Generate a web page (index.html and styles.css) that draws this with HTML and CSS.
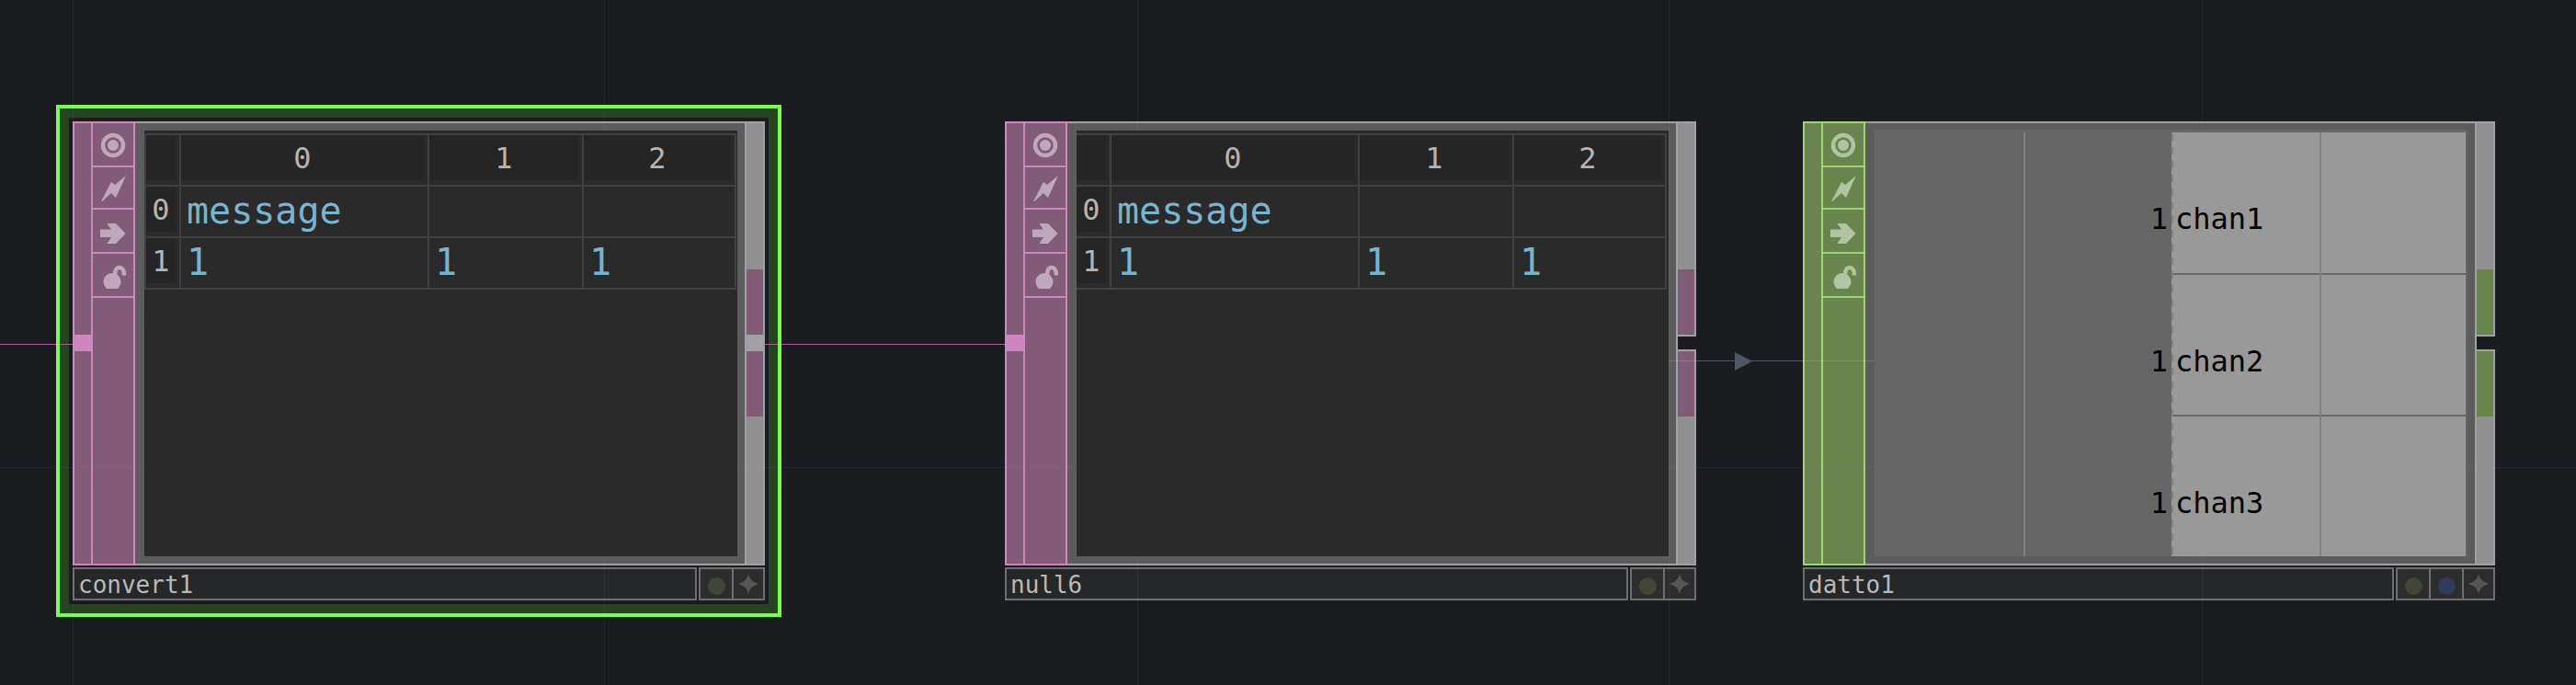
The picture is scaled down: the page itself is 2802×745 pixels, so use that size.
FILE: index.html
```
<!DOCTYPE html>
<html lang="en">
<head>
<meta charset="utf-8">
<title>Network editor</title>
<link rel="stylesheet" href="styles.css">
</head>
<body>
<svg class="defs" width="0" height="0" aria-hidden="true">
  <symbol id="i-view" viewBox="0 0 28 28"><circle cx="14" cy="14" r="11" fill="none" stroke="currentColor" stroke-width="4.500"/><circle cx="14" cy="14" r="6"/></symbol>
  <symbol id="i-bolt" viewBox="0 0 28 28"><path d="M0 30 12 7 16 10 28 0 17 24 12 19Z"/></symbol>
  <symbol id="i-arrow" viewBox="0 0 28 28"><path d="M0 11.500H12L8 6V5H17L27.500 16 17 27H8V26L12 20H0Z"/></symbol>
  <symbol id="i-lock" viewBox="0 0 28 28"><circle cx="13" cy="20.500" r="9.500"/><path d="M16.500 14C14 3 26.500 1 26 13.500" fill="none" stroke="currentColor" stroke-width="4.500"/></symbol>
  <symbol id="i-star" viewBox="0 0 22 22"><path d="M11 0Q12.500 8.500 22 11 12.500 13.500 11 22 9.500 13.500 0 11 9.500 8.500 11 0Z"/></symbol>
</svg>
<main class="network">
  <article class="node table-op linked-in linked-out selected" style="left:79px;width:753px">
    <div class="body">
      <div class="input"></div>
      <div class="flags">
        <button aria-label="Viewer active"><svg><use href="#i-view"/></svg></button>
        <button aria-label="Cooking"><svg><use href="#i-bolt"/></svg></button>
        <button aria-label="Bypass"><svg><use href="#i-arrow"/></svg></button>
        <button aria-label="Lock"><svg><use href="#i-lock"/></svg></button>
      </div>
      <div class="viewer">
        <table class="grid">
          <colgroup><col class="c-row"><col class="c-first"><col class="c-mid"><col class="c-last"></colgroup>
          <tr><th><span></span></th><th><span>0</span></th><th><span>1</span></th><th><span>2</span></th></tr>
          <tr><th><span>0</span></th><td>message</td><td></td><td></td></tr>
          <tr><th><span>1</span></th><td>1</td><td>1</td><td>1</td></tr>
        </table>
      </div>
      <div class="output"><div class="port up"></div><div class="notch"></div><div class="port down"></div></div>
    </div>
    <div class="footer">
      <input class="name" aria-label="Operator name" value="convert1">
      <div class="tools">
        <button aria-label="Display"><i class="dot"></i></button>
        <button aria-label="Activate viewer"><svg><use href="#i-star"/></svg></button>
      </div>
    </div>
  </article>

  <article class="node table-op linked-in" style="left:1093px;width:752px">
    <div class="body">
      <div class="input"></div>
      <div class="flags">
        <button aria-label="Viewer active"><svg><use href="#i-view"/></svg></button>
        <button aria-label="Cooking"><svg><use href="#i-bolt"/></svg></button>
        <button aria-label="Bypass"><svg><use href="#i-arrow"/></svg></button>
        <button aria-label="Lock"><svg><use href="#i-lock"/></svg></button>
      </div>
      <div class="viewer scrolled">
        <table class="grid">
          <colgroup><col class="c-row"><col class="c-first"><col class="c-mid"><col class="c-last"></colgroup>
          <tr><th><span></span></th><th><span>0</span></th><th><span>1</span></th><th><span>2</span></th></tr>
          <tr><th><span>0</span></th><td>message</td><td></td><td></td></tr>
          <tr><th><span>1</span></th><td>1</td><td>1</td><td>1</td></tr>
        </table>
      </div>
      <div class="output"><div class="port up"></div><div class="notch"></div><div class="port down"></div></div>
    </div>
    <div class="footer">
      <input class="name" aria-label="Operator name" value="null6">
      <div class="tools">
        <button aria-label="Display"><i class="dot"></i></button>
        <button aria-label="Activate viewer"><svg><use href="#i-star"/></svg></button>
      </div>
    </div>
  </article>

  <article class="node chan-op" style="left:1961px;width:753px">
    <div class="body">
      <div class="input"></div>
      <div class="flags">
        <button aria-label="Viewer active"><svg><use href="#i-view"/></svg></button>
        <button aria-label="Cooking"><svg><use href="#i-bolt"/></svg></button>
        <button aria-label="Bypass"><svg><use href="#i-arrow"/></svg></button>
        <button aria-label="Lock"><svg><use href="#i-lock"/></svg></button>
      </div>
      <div class="viewer channels">
        <div class="values"><span>1</span><span>1</span><span>1</span></div>
        <div class="names"><span>chan1</span><span>chan2</span><span>chan3</span></div>
      </div>
      <div class="output"><div class="port up"></div><div class="notch"></div><div class="port down"></div></div>
    </div>
    <div class="footer">
      <input class="name" aria-label="Operator name" value="datto1">
      <div class="tools">
        <button aria-label="Display"><i class="dot"></i></button>
        <button aria-label="Export"><i class="dot blue"></i></button>
        <button aria-label="Activate viewer"><svg><use href="#i-star"/></svg></button>
      </div>
    </div>
  </article>

  <svg class="wires" aria-hidden="true">
    <g class="guides"><path d="M79.500 0V745M657.500 0V745M1237.500 0V745M1815.500 0V745M2395.500 0V745"/><path class="level" d="M0 508.500H2802"/></g>
    <path class="wire" d="M0 374.500H61M65 374.500H79M831 374.500H846M850 374.500H1093"/>
    <path class="ref" d="M1845 392.500H1961"/>
    <path class="ref faint" d="M1815 392.500H1845M1961 392.500H2039"/>
    <path class="head" d="M1887 383 1906 393 1887 403Z"/>
  </svg>
</main>
</body>
</html>
```
FILE: styles.css
```
* { box-sizing: border-box; }
body { margin: 0; background: #1b1c20; font-family: "DejaVu Sans Mono", monospace; }
button { appearance: none; margin: 0; padding: 0; border: 0; background: none; color: inherit; display: flex; align-items: center; justify-content: center; }
.defs { position: absolute; }
.network { position: relative; min-height: 100vh; overflow: hidden; }

.node { position: absolute; top: 132px; --frame: #a0a1a5; }
.table-op { --fill: #825b77; --line: #cd87be; --icon: #c0a8bb; }
.chan-op { --fill: #67854d; --line: #9fd673; --icon: #b1c3a0; }
.selected::before { content: ""; position: absolute; inset: -18px; border: 4px solid #77ff4a; box-shadow: inset 0 0 0 10px #25441f; }

.body { position: relative; display: flex; height: 483px; background: #5c5c5c; border: solid var(--frame); border-width: 2px 0; }
.input { width: 22px; margin: -2px 0; background: var(--fill); border: 2px solid var(--line); padding-top: 230px; }
.linked-in .input::after { content: ""; display: block; height: 18px; background: var(--line); }
.flags { width: 46px; margin: -2px 0; background: var(--fill); color: var(--icon); border: solid var(--line); border-width: 2px 2px 2px 0; display: flex; flex-direction: column; }
.flags button { height: 48px; padding-top: 2px; border-bottom: 2px solid var(--line); }
.flags button:nth-child(2) { height: 46px; }
.flags svg { width: 28px; height: 28px; fill: currentColor; overflow: visible; }

.viewer { position: relative; z-index: 2; flex: 1; margin: 8px 8px 8px 10px; background: #2a2a2a; overflow: hidden; padding-top: 3px; }
.grid { border-collapse: separate; border-spacing: 0; table-layout: fixed; width: 644px; border-top: 2px solid #404040; border-left: 2px solid #404040; }
.scrolled .grid { margin-left: -2px; }
.c-row { width: 38px; }
.c-first { width: 270px; }
.c-mid { width: 168px; }
.grid th, .grid td { height: 56px; padding: 0; border: solid #404040; border-width: 0 2px 2px 0; }
.grid th { padding: 0 4px 5px 0; font-size: 32px; line-height: 51px; font-weight: 400; color: #b4b4b4; }
.grid th span { display: block; height: 49px; background: #252525; }
.grid td { padding: 0 0 2px 6px; font-size: 40px; line-height: 52px; color: #78b4cd; }

.output { width: 22px; margin: -2px 0; display: flex; flex-direction: column; background: #909090; border: solid var(--frame); border-width: 2px 0 2px 2px; }
.port { border-right: 2px solid var(--frame); display: flex; align-items: flex-end; }
.port::before { content: ""; width: 100%; height: 71px; background: var(--fill); }
.port.up { height: 230px; }
.port.down { flex: 1; align-items: flex-start; }
.notch { height: 18px; background: #1b1c20; border: solid var(--frame); border-width: 2px 0; }
.linked-out .notch { background: var(--frame); }

.footer { position: relative; display: flex; gap: 2px; margin-top: 2px; height: 36px; }
.name { flex: 1; min-width: 0; padding: 2px 0 0 4px; border: 2px solid #6e6f73; border-radius: 0; background: #262729; color: #b9b9b9; font: 26px "DejaVu Sans Mono", monospace; outline: 0; }
.tools { display: flex; border: 2px solid #6e6f73; background: #2c2d2c; color: #555755; }
.tools button { width: 32px; }
.tools button:not(:last-child) { width: 36px; border-right: 2px solid #6e6f73; }
.tools svg { width: 22px; height: 22px; fill: currentColor; overflow: visible; }
.dot { width: 19px; height: 19px; margin-top: 4px; border-radius: 50%; background: #404738; }
.dot.blue { background: #303d58; }

.channels { display: grid; grid-template-columns: 323px 1fr; margin-top: 7px; background: #666; color: #000; font-size: 32px; line-height: 40px; padding-right: 2px; }
.values, .names { display: grid; grid-template-rows: 155fr 154fr 152fr; }
.values { text-align: right; padding-right: 4px; background: linear-gradient(#828282, #828282) 162px 0 / 2px 100% no-repeat; }
.values span, .names span { padding-top: 74px; }
.names { position: relative; background: #999; }
.names span { padding-left: 4px; border-bottom: 2px solid #6a6a6a; }
.names span:last-child { border-bottom: 0; }
.names::before { content: ""; position: absolute; inset: 0 auto 0 0; width: 2px; background: linear-gradient(transparent 50%, #828282 50%) 0 -6px / 2px 15px; }
.names::after { content: ""; position: absolute; top: 0; bottom: 0; left: 161px; width: 2px; background: #828282; }

.wires { position: absolute; inset: 0; z-index: 1; width: 100%; height: 100%; fill: none; pointer-events: none; }
.guides { stroke: #fff; stroke-opacity: .05; }
.level { stroke: #a0a0ff; stroke-opacity: .09; }
.wire { stroke: #a3618f; }
.ref { stroke: #4e5764; }
.faint { stroke: #fff; stroke-opacity: .13; }
.head { fill: #4e5764; }
```
